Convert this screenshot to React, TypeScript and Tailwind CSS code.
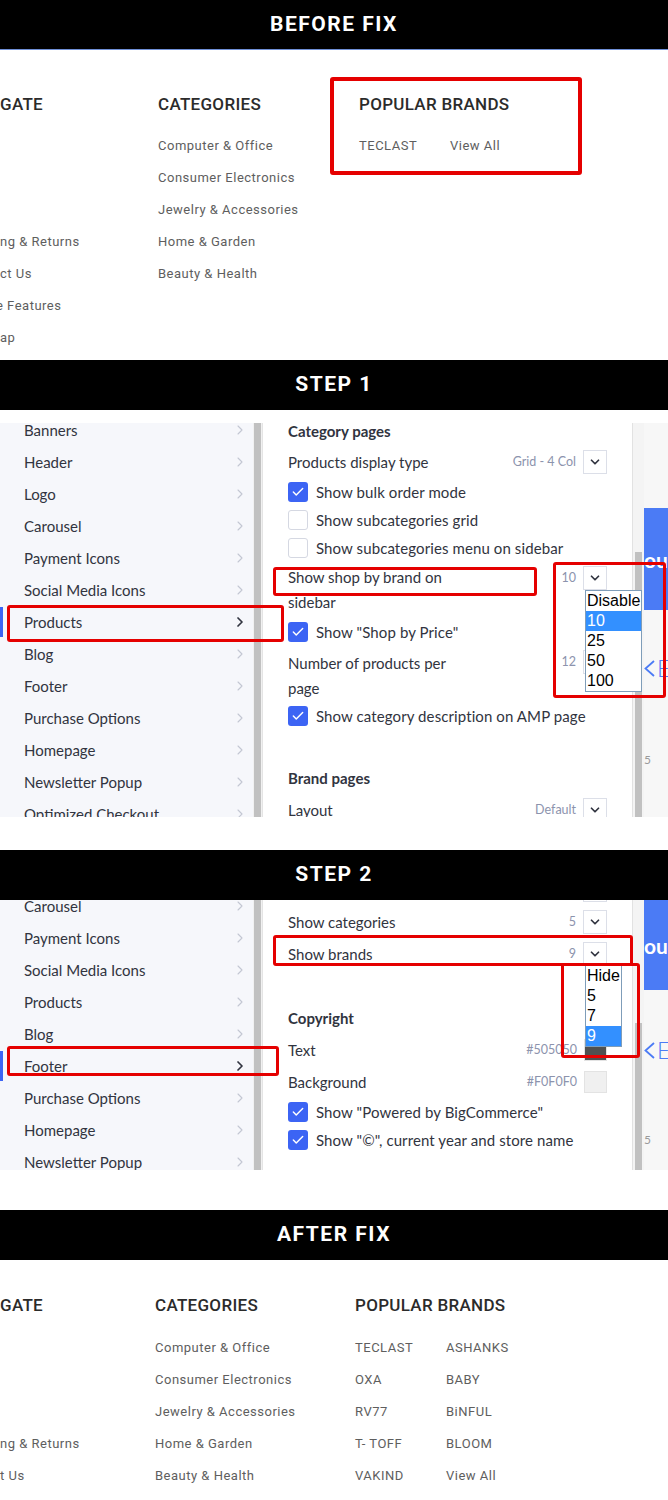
import { Check, ChevronDown, ChevronRight } from "lucide-react";

// Fonts
const FOOT = "font-['Roboto',sans-serif]";
const PANEL = "font-['Lato','Noto_Sans',sans-serif]";

function Bar({ label, line = false }: { label: string; line?: boolean }) {
  return (
    <div
      className={`h-[50px] bg-black flex items-center justify-center ${
        line ? "border-b border-[#6f8fd6] pt-px" : ""
      }`}
    >
      <span className="text-white text-[21px] font-bold tracking-[1.5px] font-['Roboto',sans-serif]">
        {label}
      </span>
    </div>
  );
}

function RedBox({ className }: { className: string }) {
  return <div className={`absolute border-[#e50000] rounded-[3px] ${className}`} />;
}

function FootHeading({ children }: { children: React.ReactNode }) {
  return (
    <div className="h-[22px] leading-[22px] text-[17px] font-medium tracking-[0.3px] text-[#2b2b2b] whitespace-nowrap">
      {children}
    </div>
  );
}

function FootLink({ children }: { children?: React.ReactNode }) {
  return (
    <div className="h-[32px] flex items-center text-[13px] tracking-[0.5px] text-[#5e5e5e] whitespace-nowrap">
      {children}
    </div>
  );
}

function FootCol({ title, rows, width, gap }: { title: string; rows: string[]; width: string; gap: string }) {
  return (
    <div className={`${width} shrink-0`}>
      <FootHeading>{title}</FootHeading>
      <div className={gap}>
        {rows.map((r, i) => (
          <FootLink key={i}>{r}</FootLink>
        ))}
      </div>
    </div>
  );
}

const categories = [
  "Computer & Office",
  "Consumer Electronics",
  "Jewelry & Accessories",
  "Home & Garden",
  "Beauty & Health",
];

function BeforeFooter() {
  return (
    <div className={`relative h-[310px] bg-white overflow-hidden pt-[43px] flex ${FOOT}`}>
      <div className="w-[158px] shrink-0">
        <FootHeading>GATE</FootHeading>
        <div className="mt-[15px]">
          <FootLink />
          <FootLink />
          <FootLink />
          <FootLink>ng &amp; Returns</FootLink>
          <FootLink>ct Us</FootLink>
          <FootLink>
            <span className="-ml-[4px]">e Features</span>
          </FootLink>
          <FootLink>ap</FootLink>
        </div>
      </div>
      <FootCol title="CATEGORIES" rows={categories} width="w-[201px]" gap="mt-[15px]" />
      <div>
        <FootHeading>POPULAR BRANDS</FootHeading>
        <div className="mt-[15px] grid grid-cols-[91px_auto]">
          <FootLink>TECLAST</FootLink>
          <FootLink>View All</FootLink>
        </div>
      </div>
      <RedBox className="left-[330px] top-[27px] w-[252px] h-[98px] border-[4px]" />
    </div>
  );
}

const brands = [
  ["TECLAST", "ASHANKS"],
  ["OXA", "BABY"],
  ["RV77", "BiNFUL"],
  ["T- TOFF", "BLOOM"],
  ["VAKIND", "View All"],
];

function AfterFooter() {
  return (
    <div className={`h-[240px] bg-white overflow-hidden pt-[34px] flex ${FOOT}`}>
      <div className="w-[155px] shrink-0">
        <FootHeading>GATE</FootHeading>
        <div className="mt-[16px]">
          <FootLink />
          <FootLink />
          <FootLink />
          <FootLink>ng &amp; Returns</FootLink>
          <FootLink>t Us</FootLink>
        </div>
      </div>
      <FootCol title="CATEGORIES" rows={categories} width="w-[200px]" gap="mt-[16px]" />
      <div>
        <FootHeading>POPULAR BRANDS</FootHeading>
        <div className="mt-[16px] grid grid-cols-[91px_auto]">
          {brands.flat().map((b) => (
            <FootLink key={b}>{b}</FootLink>
          ))}
        </div>
      </div>
    </div>
  );
}

/* ---------- theme editor panel ---------- */

const menu = [
  "Banners",
  "Header",
  "Logo",
  "Carousel",
  "Payment Icons",
  "Social Media Icons",
  "Products",
  "Blog",
  "Footer",
  "Purchase Options",
  "Homepage",
  "Newsletter Popup",
  "Optimized Checkout",
];

function Sidebar({ items, active, offset }: { items: string[]; active: string; offset: string }) {
  return (
    <div className="w-[253px] shrink-0 bg-[#f6f7fb] overflow-hidden">
      <div className={offset}>
        {items.map((it) => {
          const on = it === active;
          return (
            <div key={it} className="h-[32px] flex items-center pr-[5px] text-[15px] text-[#313440]">
              <div className={`w-[3px] h-[30px] ${on ? "bg-[#3c64f4]" : ""}`} />
              <span className="pl-[21px] flex-1 whitespace-nowrap">{it}</span>
              <ChevronRight
                size={16}
                strokeWidth={on ? 2.6 : 1.6}
                className={on ? "text-[#313440]" : "text-[#c3c7d3]"}
              />
            </div>
          );
        })}
      </div>
    </div>
  );
}

function SideScroll() {
  return (
    <div className="w-[10px] shrink-0 bg-[#f1f1f1] border-r border-[#e4e4e4] flex justify-center">
      <div className="w-[7px] bg-[#c1c1c1]" />
    </div>
  );
}

function SelectBox() {
  return (
    <div className="w-[24px] h-[24px] shrink-0 border border-[#dcdfe8] bg-white flex items-center justify-center">
      <ChevronDown size={14} strokeWidth={3} className="text-[#313440]" />
    </div>
  );
}

function Box({ checked }: { checked: boolean }) {
  return checked ? (
    <div className="w-[20px] h-[20px] shrink-0 rounded-[3px] bg-[#3c64f4] flex items-center justify-center">
      <Check size={14} strokeWidth={2.5} className="text-white" />
    </div>
  ) : (
    <div className="w-[20px] h-[20px] shrink-0 rounded-[3px] border border-[#d5d8e2] bg-white" />
  );
}

function Value({ children }: { children: React.ReactNode }) {
  return <span className="text-[12.5px] text-[#8c93ad]">{children}</span>;
}

function SelectRow({ label, value, h = "h-[32px]" }: { label: string; value?: string; h?: string }) {
  return (
    <div className={`${h} flex items-center justify-between`}>
      <span className="whitespace-nowrap">{label}</span>
      <div className="flex items-center gap-[7px]">
        {value && <Value>{value}</Value>}
        <SelectBox />
      </div>
    </div>
  );
}

function TwoLineRow({ a, b, value, pt }: { a: string; b: string; value: string; pt: string }) {
  return (
    <div className="h-[52px] flex items-start justify-between">
      <span className={`leading-[25px] ${pt}`}>
        {a}
        <br />
        {b}
      </span>
      <div className="flex items-center gap-[7px] pt-[2px]">
        <Value>{value}</Value>
        <SelectBox />
      </div>
    </div>
  );
}

function CheckRow({ label, checked, h = "h-[28px]" }: { label: string; checked: boolean; h?: string }) {
  return (
    <div className={`${h} flex items-center gap-[8px]`}>
      <Box checked={checked} />
      <span className="whitespace-nowrap tracking-[0.1px]">{label}</span>
    </div>
  );
}

function Heading({ children, h = "h-[32px]" }: { children: React.ReactNode; h?: string }) {
  return <div className={`${h} flex items-center font-bold`}>{children}</div>;
}

function SwatchRow({ label, hex, color }: { label: string; hex: string; color: string }) {
  return (
    <div className="h-[32px] flex items-center justify-between">
      <span>{label}</span>
      <div className="flex items-center gap-[7px]">
        <Value>{hex}</Value>
        <div className={`w-[23px] h-[22px] border border-[#e3e3e3] ${color}`} />
      </div>
    </div>
  );
}

function RightScroll({ top }: { top: string }) {
  return (
    <div className="w-[12px] shrink-0 bg-[#f4f4f4] border-l border-[#e2e2e2] flex justify-center">
      <div className={`w-[7px] bg-[#c1c1c1] ${top}`} />
    </div>
  );
}

function Preview({ blockTop, blockH, gap1, gap2 }: { blockTop: string; blockH: string; gap1: string; gap2: string }) {
  return (
    <div className="w-[24px] shrink-0 bg-[#f7f7f7] overflow-hidden flex flex-col font-['Lato',sans-serif]">
      <div className={`${blockTop} ${blockH} bg-[#4b7bf5] flex items-center`}>
        <span className="text-white text-[21px] font-bold leading-none">ou</span>
      </div>
      <div className={`${gap1} h-[28px] flex items-center gap-[2px] text-[#4b7bf5] whitespace-nowrap`}>
        <svg width="11" height="17" viewBox="0 0 11 17" className="shrink-0">
          <polyline points="10,1 1.5,8.5 10,16" fill="none" stroke="currentColor" strokeWidth="1.8" />
        </svg>
        <span className="text-[23px] leading-none font-light">E</span>
      </div>
      <div className={`${gap2} h-[16px] leading-[16px] text-[12px] text-[#9a9a9a]`}>5</div>
    </div>
  );
}

function Dropdown({ options, selected, className }: { options: string[]; selected: string; className: string }) {
  return (
    <div
      className={`absolute bg-white border border-[#7f9db9] font-['Liberation_Sans',Arial,sans-serif] text-[16px] leading-[20px] text-black ${className}`}
    >
      {options.map((o) => (
        <div key={o} className={`px-[1px] ${o === selected ? "bg-[#3390ff] text-white" : ""}`}>
          {o}
        </div>
      ))}
    </div>
  );
}

function StepOne() {
  return (
    <div className={`relative h-[440px] bg-white pt-[13px] ${PANEL}`}>
      <div className="h-[394px] flex overflow-hidden">
        <Sidebar items={menu} active="Products" offset="-mt-[9px]" />
        <SideScroll />
        <div className="w-[369px] shrink-0 bg-white overflow-hidden px-[25px] text-[15px] text-[#313440]">
          <div className="-mt-[9px]">
            <Heading h="h-[34px]">Category pages</Heading>
            <SelectRow label="Products display type" value="Grid - 4 Col" h="h-[28px]" />
            <CheckRow label="Show bulk order mode" checked h="h-[32px]" />
            <CheckRow label="Show subcategories grid" checked={false} h="h-[24px]" />
            <CheckRow label="Show subcategories menu on sidebar" checked={false} h="h-[32px]" />
            <TwoLineRow a="Show shop by brand on" b="sidebar" value="10" pt="pt-[1px]" />
            <CheckRow label={'Show "Shop by Price"'} checked h="h-[32px]" />
            <TwoLineRow a="Number of products per" b="page" value="12" pt="pt-[3px]" />
            <CheckRow label="Show category description on AMP page" checked h="h-[32px]" />
            <div className="h-[30px]" />
            <Heading>Brand pages</Heading>
            <SelectRow label="Layout" value="Default" />
          </div>
        </div>
        <RightScroll top="mt-[129px]" />
        <Preview blockTop="mt-[85px]" blockH="h-[102px]" gap1="mt-[44px]" gap2="mt-[70px]" />
      </div>

      <Dropdown
        options={["Disable", "10", "25", "50", "100"]}
        selected="10"
        className="left-[585px] top-[180px] w-[57px]"
      />
      <RedBox className="left-[7px] top-[195px] w-[277px] h-[37px] border-[3px]" />
      <RedBox className="left-[273px] top-[157px] w-[264px] h-[29px] border-[3px]" />
      <RedBox className="left-[553px] top-[152px] w-[113px] h-[136px] border-[3px]" />
    </div>
  );
}

function StepTwo() {
  return (
    <div className={`relative h-[310px] bg-white ${PANEL}`}>
      <div className="h-[270px] flex overflow-hidden">
        <Sidebar items={menu.slice(3)} active="Footer" offset="-mt-[10px]" />
        <SideScroll />
        <div className="w-[369px] shrink-0 bg-white overflow-hidden px-[25px] text-[15px] text-[#313440]">
          <div className="-mt-[26px]">
            <SelectRow label="" />
            <SelectRow label="Show categories" value="5" />
            <SelectRow label="Show brands" value="9" />
            <div className="h-[32px]" />
            <Heading>Copyright</Heading>
            <SwatchRow label="Text" hex="#505050" color="bg-[#505050]" />
            <SwatchRow label="Background" hex="#F0F0F0" color="bg-[#f0f0f0]" />
            <CheckRow label={'Show "Powered by BigCommerce"'} checked />
            <CheckRow label={'Show "©", current year and store name'} checked />
          </div>
        </div>
        <RightScroll top="mt-[123px]" />
        <Preview blockTop="mt-0" blockH="h-[90px]" gap1="mt-[46px]" gap2="mt-[68px]" />
      </div>

      <Dropdown options={["Hide", "5", "7", "9"]} selected="9" className="left-[585px] top-[65px] w-[37px]" />
      <RedBox className="left-[7px] top-[146px] w-[272px] h-[30px] border-[3px]" />
      <RedBox className="left-[273px] top-[35px] w-[360px] h-[31px] border-[3px]" />
      <RedBox className="left-[561px] top-[63px] w-[79px] h-[95px] border-[3px]" />
    </div>
  );
}

export default function App() {
  return (
    <div className="w-[668px] h-[1500px] bg-white overflow-hidden">
      <Bar label="BEFORE FIX" line />
      <BeforeFooter />
      <Bar label="STEP 1" />
      <StepOne />
      <Bar label="STEP 2" />
      <StepTwo />
      <Bar label="AFTER FIX" />
      <AfterFooter />
    </div>
  );
}
